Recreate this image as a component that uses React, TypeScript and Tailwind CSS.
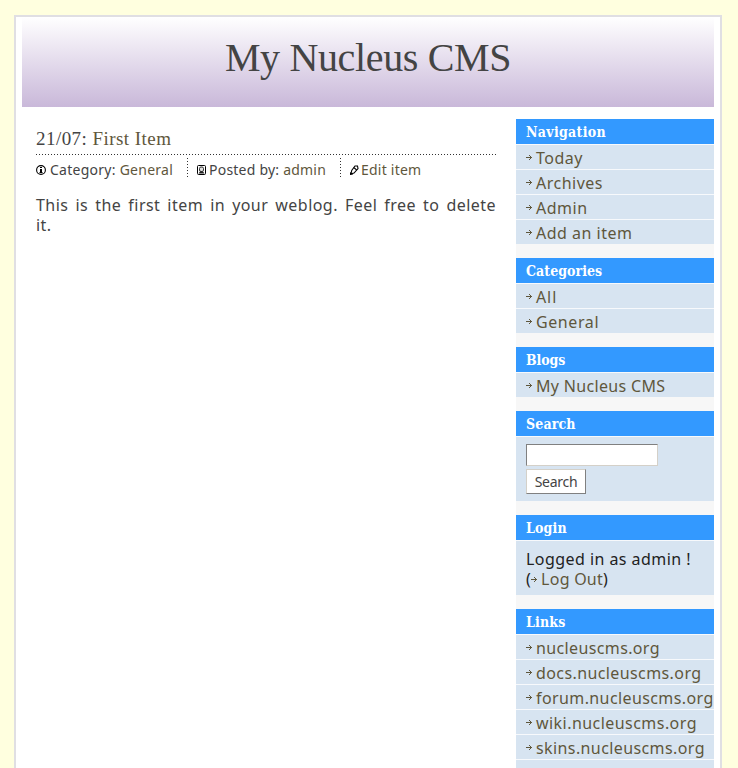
import React from 'react';

const sans = "font-['Noto_Sans','Open_Sans',sans-serif]";
const serif = "font-['Liberation_Serif',serif]";
const slab = "font-['DejaVu_Serif_Condensed','DejaVu_Serif',serif] font-stretch-condensed";

function Arrow() {
  return (
    <svg width="7" height="7" viewBox="0 0 7 7" shapeRendering="crispEdges" className="shrink-0" fill="#5f573c">
      <path d="M0 3h6v1H0zM3 1h1v1H3zM4 2h1v1H4zM4 4h1v1H4zM3 5h1v1H3z" />
    </svg>
  );
}

function InfoIcon() {
  return (
    <svg width="10" height="10" viewBox="0 0 10 10" className="shrink-0">
      <circle cx="5" cy="5" r="4.4" fill="#fff" stroke="#000" strokeWidth="1.1" />
      <path d="M4 2h2v1H4zM4 4h2v3H4zM3.5 7h3v1h-3z" fill="#000" />
    </svg>
  );
}

function PersonIcon() {
  return (
    <svg width="9" height="10" viewBox="0 0 9 10" className="shrink-0">
      <rect x=".5" y=".5" width="8" height="9" rx="1" fill="#fff" stroke="#000" />
      <rect x="2.5" y="2" width="4" height="4.5" rx="1.5" fill="#ddd" stroke="#222" strokeWidth=".9" />
      <path d="M1.5 8.5L3 6.5h3l1.5 2z" fill="#222" />
    </svg>
  );
}

function PencilIcon() {
  return (
    <svg width="9" height="10" viewBox="0 0 9 10" className="shrink-0">
      <path d="M1 8.7L1.7 5.5L5 1L7.5 1L8 3.5L4 8Z" fill="#fff" stroke="#000" strokeWidth="1.1" />
      <path d="M0 10V7L3.2 9.5ZM4 2L7 4.5L6.4 5.4L3.4 3Z" fill="#000" />
    </svg>
  );
}

function Panel({ title, tracking = 'tracking-[0.15px]', children }: { title: string; tracking?: string; children: React.ReactNode }) {
  return (
    <section className="mb-[14px]">
      <h2 className={`${slab} h-[25px] bg-[#3399ff] pl-[10px] text-[14px] leading-[27px] font-bold text-white ${tracking}`}>{title}</h2>
      {children}
    </section>
  );
}

function Item({ label, tracking = 'tracking-[0.5px]' }: { label: string; tracking?: string }) {
  return (
    <li className="flex h-[25px] items-center gap-[3px] border-t border-[#f7f9fc] bg-[#d7e4f1] pl-[10px]">
      <Arrow />
      <a className={`pt-[2px] text-[16px] leading-[24px] whitespace-nowrap text-[#5f573c] ${tracking}`}>{label}</a>
    </li>
  );
}

export default function App() {
  return (
    <div className={`${sans} h-[768px] overflow-hidden bg-[#ffffdf] pt-[15px] pl-[14px]`}>
      <div className="h-[900px] w-[708px] border-2 border-[#e0dfe3] bg-white px-[6px]">
        <header className="h-[90px] bg-linear-to-b from-white to-[#c9b8d9] pt-[18px] text-center">
          <h1 className={`${serif} text-[40px] leading-[46px] tracking-[-0.35px] text-[#444]`}>My Nucleus CMS</h1>
        </header>
        <div className="flex justify-between pt-[12px]">
          <main className="ml-[14px] w-[460px] text-[#444]">
            <h2 className={`${serif} mt-[9px] h-[26px] text-[19px] leading-[22px] tracking-[0.45px]`}>
              21/07: <a className="text-[#5f573c]">First Item</a>
            </h2>
            <div className="h-px bg-[repeating-linear-gradient(to_right,#333_0_1px,transparent_1px_3px)]" />
            <div className="mt-[3px] flex h-[20px] text-[14px] leading-[24px]">
              <div className="flex w-[151px] items-center pt-[4px]">
                <InfoIcon />
                <span className="ml-[4px] tracking-[0.26px] whitespace-nowrap">Category: <a className="text-[#5f573c]">General</a></span>
              </div>
              <div className="w-px bg-[repeating-linear-gradient(to_bottom,#333_0_1px,transparent_1px_3px)]" />
              <div className="flex w-[152px] items-center pt-[4px] pl-[9px]">
                <PersonIcon />
                <span className="ml-[3px] tracking-[0.22px] whitespace-nowrap">Posted by: <a className="text-[#5f573c]">admin</a></span>
              </div>
              <div className="w-px bg-[repeating-linear-gradient(to_bottom,#333_0_1px,transparent_1px_3px)]" />
              <div className="flex items-center pt-[4px] pl-[9px]">
                <PencilIcon />
                <a className="ml-[2px] tracking-[0.22px] whitespace-nowrap text-[#5f573c]">Edit item</a>
              </div>
            </div>
            <p className="mt-[17px] text-[16px] leading-[20px] tracking-[0.45px]">
              <span className="block [text-align-last:justify]">This is the first item in your weblog. Feel free to delete</span> it.
            </p>
          </main>
          <aside className="w-[198px] bg-[#f7f7f7]">
            <Panel title="Navigation" tracking="tracking-[0.3px]">
              <ul>
                <Item label="Today" />
                <Item label="Archives" />
                <Item label="Admin" />
                <Item label="Add an item" />
              </ul>
            </Panel>
            <Panel title="Categories" tracking="tracking-[0.05px]">
              <ul>
                <Item label="All" tracking="tracking-[0.9px]" />
                <Item label="General" tracking="tracking-[0.6px]" />
              </ul>
            </Panel>
            <Panel title="Blogs" tracking="tracking-[-0.1px]">
              <ul>
                <Item label="My Nucleus CMS" tracking="tracking-[0.32px]" />
              </ul>
            </Panel>
            <Panel title="Search">
              <div className="h-[65px] border-t border-[#f7f9fc] bg-[#d7e4f1] pt-[7px] pl-[10px]">
                <input className="block h-[22px] w-[132px] border border-t-[#808080] border-r-[#d4d0c8] border-b-[#d4d0c8] border-l-[#808080] bg-white" />
                <button className="mt-[3px] block h-[25px] w-[60px] border border-t-[#d4d0c8] border-r-[#808080] border-b-[#808080] border-l-[#d4d0c8] bg-white text-[14px] leading-[23px] tracking-[-0.3px] text-[#444]">Search</button>
              </div>
            </Panel>
            <Panel title="Login">
              <div className="h-[55px] border-t border-[#f7f9fc] bg-[#d7e4f1] pt-[8px] pl-[10px] text-[16px] leading-[20px] text-[#222]">
                <div className="tracking-[0.45px] whitespace-nowrap">Logged in as admin !</div>
                <div className="flex items-center tracking-[0.25px]">
                  <span>(</span><Arrow /><a className="ml-[3px] text-[#5f573c]">Log Out</a><span>)</span>
                </div>
              </div>
            </Panel>
            <Panel title="Links">
              <ul>
                <Item label="nucleuscms.org" tracking="tracking-[0.37px]" />
                <Item label="docs.nucleuscms.org" tracking="tracking-[0.4px]" />
                <Item label="forum.nucleuscms.org" tracking="tracking-[0.4px]" />
                <Item label="wiki.nucleuscms.org" tracking="tracking-[0.45px]" />
                <Item label="skins.nucleuscms.org" tracking="tracking-[0.4px]" />
                <Item label="" />
              </ul>
            </Panel>
          </aside>
        </div>
      </div>
    </div>
  );
}
